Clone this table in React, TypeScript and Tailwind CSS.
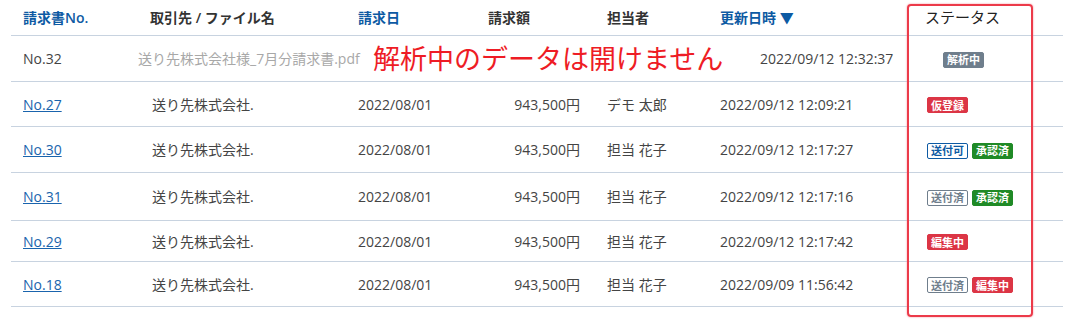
import React from "react";

type Badge = { label: string; kind: "gray" | "red" | "green" | "blueOutline" | "grayOutline" };

type Row = {
  no: string;
  partner: string;
  date: string;
  amount: string;
  owner: string;
  updated: string;
  badges: Badge[];
  h: string;
};

const rows: Row[] = [
  { no: "No.27", partner: "送り先株式会社.", date: "2022/08/01", amount: "943,500円", owner: "デモ 太郎", updated: "2022/09/12 12:09:21", badges: [{ label: "仮登録", kind: "red" }], h: "h-[45px]" },
  { no: "No.30", partner: "送り先株式会社.", date: "2022/08/01", amount: "943,500円", owner: "担当 花子", updated: "2022/09/12 12:17:27", badges: [{ label: "送付可", kind: "blueOutline" }, { label: "承認済", kind: "green" }], h: "h-[46px]" },
  { no: "No.31", partner: "送り先株式会社.", date: "2022/08/01", amount: "943,500円", owner: "担当 花子", updated: "2022/09/12 12:17:16", badges: [{ label: "送付済", kind: "grayOutline" }, { label: "承認済", kind: "green" }], h: "h-[48px]" },
  { no: "No.29", partner: "送り先株式会社.", date: "2022/08/01", amount: "943,500円", owner: "担当 花子", updated: "2022/09/12 12:17:42", badges: [{ label: "編集中", kind: "red" }], h: "h-[41px]" },
  { no: "No.18", partner: "送り先株式会社.", date: "2022/08/01", amount: "943,500円", owner: "担当 花子", updated: "2022/09/09 11:56:42", badges: [{ label: "送付済", kind: "grayOutline" }, { label: "編集中", kind: "red" }], h: "h-[45px]" },
];

const badgeStyles: Record<Badge["kind"], string> = {
  gray: "bg-[#6f7e8c] text-white border-[#6f7e8c]",
  red: "bg-[#dc3545] text-white border-[#dc3545]",
  green: "bg-[#1f8a26] text-white border-[#1f8a26]",
  blueOutline: "bg-white text-[#0d5aa3] border-[#0d5aa3]",
  grayOutline: "bg-white text-[#6f7e8c] border-[#6f7e8c]",
};

function StatusBadge({ badge }: { badge: Badge }) {
  return (
    <span
      className={`inline-flex h-[16px] items-center rounded-[2px] border px-[3px] text-[11px] font-bold leading-none ${badgeStyles[badge.kind]}`}
    >
      {badge.label}
    </span>
  );
}

export default function App() {
  return (
    <div
      className="relative h-[329px] w-[1080px] overflow-hidden bg-white text-[14px] text-[#333]"
      style={{ fontFamily: '"Open Sans", "Noto Sans CJK JP", sans-serif' }}
    >
      <div className="ml-[11px] w-[1052px]">
        {/* header */}
        <div className="flex h-[36px] items-center border-b border-[#c8d3e0] font-semibold">
          <div className="w-[139px] pl-[12px] text-[#0d5aa3]">請求書No.</div>
          <div className="w-[208px]">取引先 / ファイル名</div>
          <div className="w-[130px] text-[#0d5aa3]">請求日</div>
          <div className="w-[119px]">請求額</div>
          <div className="w-[113px]">担当者</div>
          <div className="w-[205px] text-[#0d5aa3]">更新日時 ▼</div>
          <div className="text-[15px] font-normal text-[#222]">ステータス</div>
        </div>

        {/* analyzing row */}
        <div className="flex h-[46px] items-center border-b border-[#c8d3e0]">
          <div className="w-[127px] pl-[12px] text-[#444]">No.32</div>
          <div className="w-[235px] text-[#a8a8a8]">送り先株式会社様_7月分請求書.pdf</div>
          <div className="w-[387px] text-[27px] leading-none text-[#ee1c25]">
            解析中のデータは開けません
          </div>
          <div className="w-[183px] text-[#444]">2022/09/12 12:32:37</div>
          <div>
            <StatusBadge badge={{ label: "解析中", kind: "gray" }} />
          </div>
        </div>

        {rows.map((r) => (
          <div key={r.no} className={`flex items-center border-b border-[#c8d3e0] ${r.h}`}>
            <div className="w-[139px] pl-[12px]">
              <a href="#" className="text-[#1a64ad] underline">
                {r.no}
              </a>
            </div>
            <div className="w-[208px] pl-[2px] text-[#444]">{r.partner}</div>
            <div className="w-[130px] text-[#444]">{r.date}</div>
            <div className="w-[119px] pr-[27px] text-right text-[#444]">{r.amount}</div>
            <div className="w-[113px] text-[#444]">{r.owner}</div>
            <div className="w-[207px] text-[#444]">{r.updated}</div>
            <div className="flex items-center gap-[4px] pt-[2px]">
              {r.badges.map((b) => (
                <StatusBadge key={b.label} badge={b} />
              ))}
            </div>
          </div>
        ))}
      </div>

      {/* annotation box */}
      <div className="pointer-events-none absolute left-[907px] top-[4px] h-[313px] w-[126px] rounded-[4px] border-[2px] border-[#ec3a4a] shadow-[0_0_2px_#f38a94]" />
    </div>
  );
}
